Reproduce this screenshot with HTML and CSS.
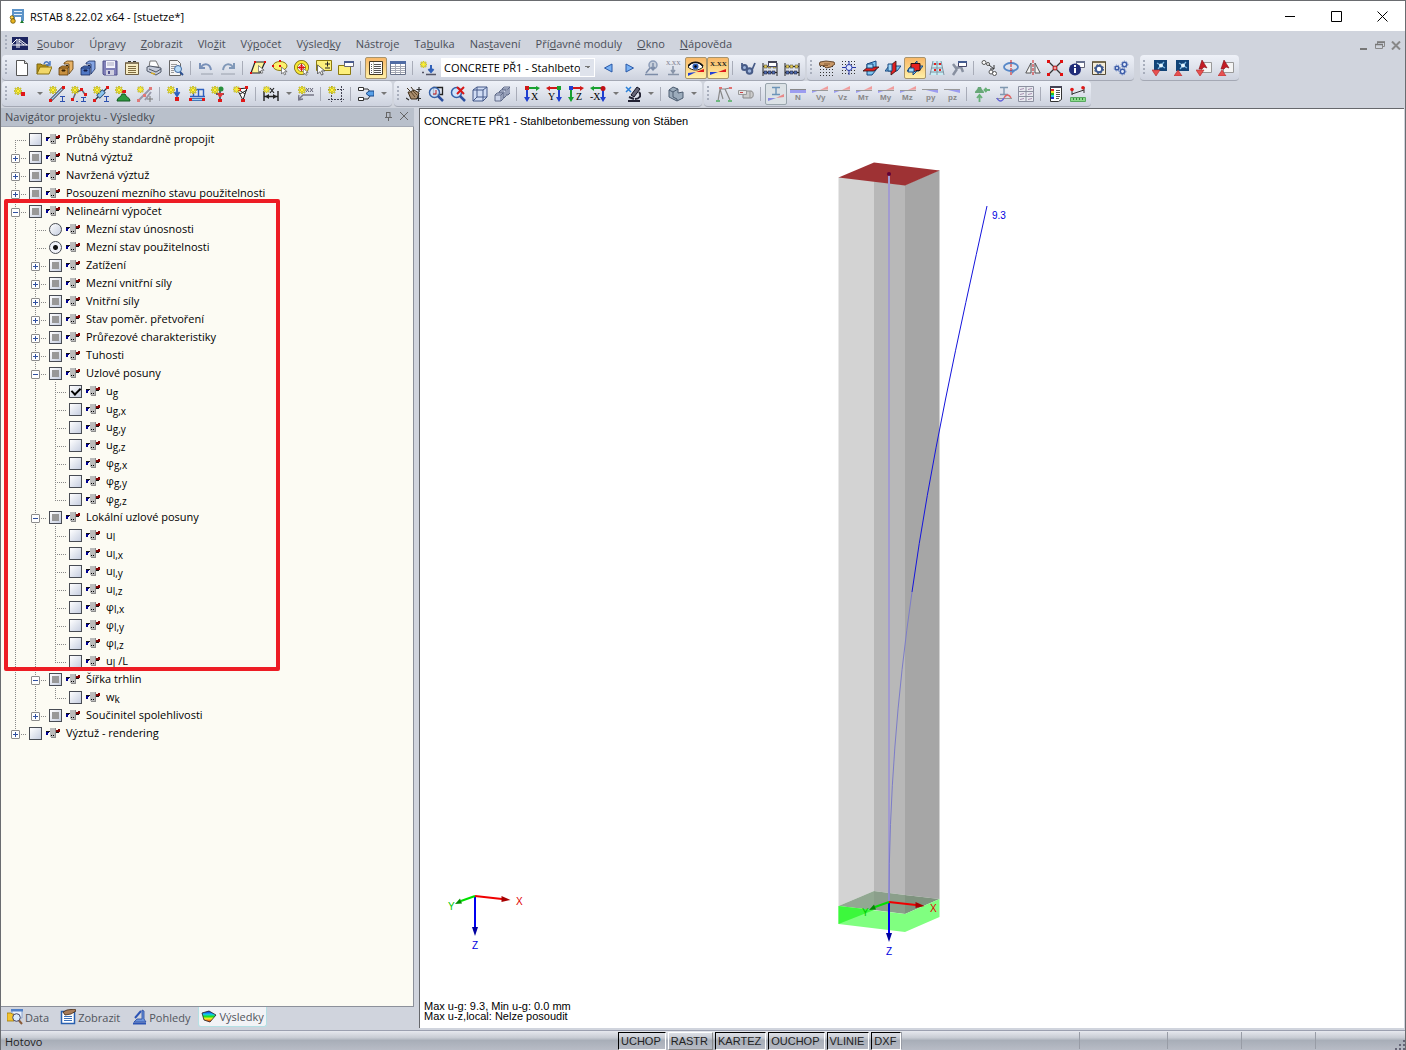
FILE: index.html
```html
<!DOCTYPE html>
<html lang="cs">
<head>
  <meta charset="UTF-8" />
  <title>RSTAB 8.22.02 x64 - [stuetze*]</title>
  <meta name="viewport" content="width=device-width, initial-scale=1.0"/>
  <link rel="stylesheet" href="styles.css">
</head>
<body>
  <!-- icon sprite -->
  <svg class="sprite" width="0" height="0" aria-hidden="true">
    <defs>
      <linearGradient id="g-rain" x1="0" y1="0" x2="0" y2="1"><stop offset="0" stop-color="#1414e0"/><stop offset=".3" stop-color="#10c8f0"/><stop offset=".5" stop-color="#20e020"/><stop offset=".7" stop-color="#f8f020"/><stop offset="1" stop-color="#e81010"/></linearGradient>
    </defs>
    <symbol id="star" viewBox="0 0 8 8"><path d="M4 0v8M0 4h8M1 1l6 6M7 1l-6 6" stroke="#a8a000" stroke-width="1.6"/><path d="M4 .5v7M.5 4h7M1.500 1.500l5 5M6.500 1.500l-5 5" stroke="#fff23c"/></symbol>
    <symbol id="cursor" viewBox="0 0 8 10"><path d="M.5.5v8l2-2 1.500 3 1.500-.7-1.500-3h3z" fill="#fff" stroke="#555" stroke-width=".8"/></symbol>
    <symbol id="result" viewBox="0 0 14 12"><path d="M0 4h5v1H0z" fill="#111"/><path d="M0 5h3v1H2v2H0z" fill="#000090"/><path d="M10 3h2V2h2v3h-4z" fill="#800000"/><path d="M8 5h5v1H8z" fill="#111"/><path d="M4 1h5v9H4z" fill="#bcbcbc"/><path d="M9 1h1v9H9zM5 10h5v1H5z" fill="#8c8c8c"/><path d="M5 8h1v1H5zM7 8h1v1H7z" fill="#000"/></symbol>

    <symbol id="app" viewBox="0 0 16 16"><path d="M3 1h12v12h-3V9H6v3H3z" fill="#5c93c8"/><path d="M5 3h8v1H5zM5 6h8v1H5z" fill="#e4f0fc"/><circle cx="3" cy="9.500" r="1.800" fill="#ffd24a" stroke="#6b5200" stroke-width=".8"/><circle cx="4" cy="13" r="2.300" fill="#e8b420" stroke="#6b5200" stroke-width=".8"/><path d="M11 15l2-3 2 3z" fill="#187828"/></symbol>
    <symbol id="bridge" viewBox="0 0 16 13"><path d="M0 0h16v13H0z" fill="#1c2460"/><path d="M0 8h16M5 2v9M7 2v9M5 2L0 7M7 2l8 6M7 4l5 4" stroke="#fff" fill="none"/></symbol>

    <symbol id="new" viewBox="0 0 16 16"><path d="M2.500.5h8l3 3v12h-11z" fill="#fff" stroke="#555"/><path d="M10.500.5v3h3" fill="#ddd" stroke="#555"/></symbol>
    <symbol id="open" viewBox="0 0 16 16"><path d="M1 14V4h4l1 1h6v3" fill="#b89418" stroke="#7a6410"/><path d="M1 14l3-7h12l-3 7z" fill="#f2d768" stroke="#8a7010"/><path d="M8 4c1-3 4-3 5 0M14 1v4h-4" stroke="#4a78c0" fill="none" stroke-width="1.500"/></symbol>
    <symbol id="block" viewBox="0 0 16 16"><path d="M1 8h9v7H1zM1 8l3-2h8l-2 2" fill="#c89040" stroke="#5a3808" stroke-width=".8"/><path d="M6 3l3-2h6v8l-4 5V4H6z" fill="#e8b468" stroke="#5a3808" stroke-width=".8"/><path d="M4 10h3v1H4zM8 5.500h2" fill="#3a2404" stroke="#3a2404"/></symbol>
    <symbol id="blockb" viewBox="0 0 16 16"><path d="M1 8h9v7H1zM1 8l3-2h8l-2 2" fill="#5078c4" stroke="#182c60" stroke-width=".8"/><path d="M6 3l3-2h6v8l-4 5V4H6z" fill="#86a6e4" stroke="#182c60" stroke-width=".8"/><path d="M4 10h3v1H4zM8 5.500h2" fill="#101c48" stroke="#101c48"/></symbol>
    <symbol id="save" viewBox="0 0 16 16"><path d="M1 1h14v14H2l-1-1z" fill="#8080b8" stroke="#50508c"/><path d="M4 1h9v7H4z" fill="#f4f4fc"/><path d="M5 3h7M5 5h7" stroke="#a8a8c0"/><path d="M4 10h8v5H4z" fill="#d0d0e0"/><path d="M6 11h2v3H6z" fill="#50508c"/></symbol>
    <symbol id="clip" viewBox="0 0 16 16"><path d="M1.500 2.500h13v12h-13z" fill="#f6ecc4" stroke="#6e5e40"/><path d="M2 2h12v2H2z" fill="#8a7c60"/><path d="M4 1.500h3M9 1.500h3" stroke="#333"/><path d="M4 6.500h8M4 8.500h8M4 10.500h8M4 12.500h8" stroke="#806c40"/></symbol>
    <symbol id="print" viewBox="0 0 16 16"><path d="M3 7l1-6h6l3 6z" fill="#fff" stroke="#777"/><path d="M1 7l3-1 11 2v4l-5 3-9-4z" fill="#c4cad8" stroke="#505868"/><path d="M3 9l7 3 5-3" fill="none" stroke="#505868"/><path d="M5 13l4 1" stroke="#d8b030" stroke-width="1.500"/></symbol>
    <symbol id="preview" viewBox="0 0 16 16"><path d="M1.500.5h8l3 3v12h-11z" fill="#f4f4f4" stroke="#666"/><path d="M3 4.500h6M3 6.500h5M3 8.500h3M3 10.500h3M3 12.500h3" stroke="#999"/><circle cx="10" cy="9" r="3.500" fill="#b8dcf8" stroke="#4068a0"/><path d="M12 12l3 3" stroke="#2c5090" stroke-width="2"/></symbol>
    <symbol id="undo" viewBox="0 0 16 16"><path d="M2 3v5h5M3 7c3-4 9-4 10 3" fill="none" stroke="#7890b8" stroke-width="2"/><path d="M3 14h12" stroke="#9aa0ac"/></symbol>
    <symbol id="redo" viewBox="0 0 16 16"><path d="M14 3v5H9M13 7c-3-4-9-4-10 3" fill="none" stroke="#8098b8" stroke-width="2"/><path d="M1 14h14" stroke="#9aa0ac"/></symbol>
    <symbol id="selrhomb" viewBox="0 0 16 16"><path d="M5 2h10l-5 11H1z" fill="#fdf49c" stroke="#222" stroke-width="1.200"/><path d="M4 1h2v2H4zM14 1h2v2h-2zM0 12h2v2H0z" fill="#e01010"/><use href="#cursor" x="8" y="5" width="7" height="9"/></symbol>
    <symbol id="selell" viewBox="0 0 16 16"><ellipse cx="8" cy="6" rx="7" ry="4.500" fill="#fdf06c" stroke="#8c7a10"/><path d="M7 0h2v2H7zM0 5h2v2H0zM7 5h2v2H7z" fill="#e01010"/><use href="#cursor" x="9" y="6" width="7" height="10"/></symbol>
    <symbol id="selring" viewBox="0 0 16 16"><circle cx="7.500" cy="7.500" r="5.500" fill="#fff" stroke="#77660a" stroke-width="4"/><circle cx="7.500" cy="7.500" r="5.500" fill="none" stroke="#f8e838" stroke-width="2.400"/><circle cx="7.500" cy="7.500" r="2" fill="none" stroke="#e01010"/><path d="M4 7.500h7M7.500 4v7" stroke="#e01010"/><use href="#cursor" x="9" y="8" width="6" height="8"/></symbol>
    <symbol id="selpm" viewBox="0 0 16 16"><path d="M.5.500h15v10H.5z" fill="#fdf07c" stroke="#8c7a10"/><path d="M9 4h5M11.500 1.500v5M9 8h5" stroke="#222"/><use href="#cursor" x="1" y="4" width="9" height="12"/></symbol>
    <symbol id="selwin" viewBox="0 0 16 16"><path d="M.5 5.500h12v9H.5z" fill="#fdf07c" stroke="#8c7a10"/><path d="M6.500 1.500h9v5h-9z" fill="#fff" stroke="#667"/><path d="M6 1h10v2H6z" fill="#4a5c90"/></symbol>
    <symbol id="list" viewBox="0 0 16 16"><path d="M1.500 1.500h13v13h-13z" fill="#fff" stroke="#443820"/><path d="M5.500 2v12" stroke="#ccb"/><path d="M3 4.500h1M3 6.500h1M3 8.500h1M3 10.500h1M3 12.500h1M6 4.500h7M6 6.500h7M6 8.500h7M6 10.500h7M6 12.500h7" stroke="#555"/></symbol>
    <symbol id="table" viewBox="0 0 16 16"><path d="M.5 1.500h15v13H.5z" fill="#fff" stroke="#667088"/><path d="M0 1h16v3H0z" fill="#506ca4"/><path d="M1 6.500h14M1 8.500h14M1 10.500h14M1 12.500h14M5.500 4v10M10.500 4v10" stroke="#a4a8b4"/></symbol>
    <symbol id="newload" viewBox="0 0 16 16"><use href="#star" x="0" y="1" width="7" height="7"/><path d="M11 5v6M8.500 9l2.500 3 2.500-3" stroke="#3060b8" fill="none" stroke-width="2"/><path d="M2 12.500h2M6 14.500h10" stroke="#556" stroke-width="1.500"/></symbol>
    <symbol id="prev" viewBox="0 0 16 16"><path d="M12 4v8L4.500 8z" fill="#7ab2f4" stroke="#2858a8"/></symbol>
    <symbol id="next" viewBox="0 0 16 16"><path d="M4 4v8l7.500-4z" fill="#7ab2f4" stroke="#2858a8"/></symbol>
    <symbol id="loadview" viewBox="0 0 16 16"><circle cx="9" cy="5" r="4" fill="#c8d0dc" stroke="#8c9cb8" stroke-width="1.500"/><path d="M6 8l-4 5M9 3v6M7 7l2 3 2-3M1 14.500h13" fill="none" stroke="#7c8ca8" stroke-width="1.500"/></symbol>
    <symbol id="xxx" viewBox="0 0 16 16"><path d="M7 6v7M5 10l2 3 2-3M2 14.500h11" fill="none" stroke="#8894a8" stroke-width="1.500"/></symbol>
    <symbol id="eye" viewBox="0 0 16 16"><path d="M0 7c4-6 11-6 15 0-4 4-11 4-15 0z" fill="#fff" stroke="#222"/><path d="M0 6c4-5 11-5 15 0" stroke="#111" stroke-width="1.500" fill="none"/><circle cx="7.500" cy="6.500" r="3" fill="#2c5cb4"/><circle cx="7.500" cy="6.500" r="1.200"/><path d="M0 16v-3l8-1z" fill="#2040d8"/><path d="M8 12l8-3v3z" fill="#e01818"/></symbol>
    <symbol id="slope" viewBox="0 0 16 16"><path d="M0 15v-3h8z" fill="#2040d8"/><path d="M8 12l8-3v3z" fill="#e01818"/></symbol>
    <symbol id="goggle" viewBox="0 0 16 16"><circle cx="4.500" cy="7.500" r="2.500" fill="#9cb4dc" stroke="#485c88" stroke-width="2"/><circle cx="9.500" cy="11" r="2.800" fill="#9cb4dc" stroke="#485c88" stroke-width="2"/><path d="M12 10l3-7M2 6V3" stroke="#485c88" stroke-width="1.800"/></symbol>
    <symbol id="abacus" viewBox="0 0 16 16"><path d="M1 3v13M15 3v13M1 6.500h14M1 12.500h14" stroke="#222" fill="none"/><path d="M2 5h3v3H2zM6 5h3v3H6zM11 5h3v3h-3z" fill="#e8cc50" stroke="#554" stroke-width=".6"/><path d="M2 11h3v3H2zM6 11h3v3H6zM10 11h3v3h-3z" fill="#5070b8" stroke="#223" stroke-width=".6"/></symbol>
    <symbol id="abacuswin" viewBox="0 0 16 16"><use href="#abacus"/><path d="M6.500 1.500h8v5h-8z" fill="#fff" stroke="#446"/><path d="M6 1h9v2H6z" fill="#445"/></symbol>
    <symbol id="hand" viewBox="0 0 16 16"><path d="M1 6.500h14M1 9.500h14M1 12.500h14M1 15.500h14" stroke="#333" stroke-dasharray="1 2"/><path d="M1 2l6-1 8 1 1 2-4 3-5 1-2-2-5-1z" fill="#c89868" stroke="#4c2c10" stroke-width=".8"/><path d="M5 4h6M4 5.500h5" stroke="#6c4420" stroke-width=".7"/></symbol>
    <symbol id="grid" viewBox="0 0 16 16"><path d="M1 1.500h14M1 4.500h14M1 7.500h14M1 10.500h14M1 13.500h14" stroke="#333" stroke-dasharray="1 2"/><path d="M8 1v14M1 7.500h14" stroke="#2838a8"/><circle cx="8" cy="7.500" r="3" fill="#dde6ff" stroke="#2838a8"/></symbol>
    <symbol id="plane1" viewBox="0 0 16 16"><path d="M4 4l9-3v9l-4 5H4z" fill="#7cc4f0" stroke="#184880"/><path d="M0 11l5-4h11l-5 4z" fill="#e02020" stroke="#301010" stroke-width=".8"/><path d="M4 4h6v4H4z" fill="#a0d8f8" stroke="#184880"/></symbol>
    <symbol id="plane2" viewBox="0 0 16 16"><path d="M0 11l4-5h12l-4 5z" fill="#7cc4f0" stroke="#184880"/><path d="M6 5l5-4v10l-5 4z" fill="#e02020" stroke="#301010" stroke-width=".8"/><path d="M3 4h4v7H3z" fill="#a0d8f8" stroke="#184880"/></symbol>
    <symbol id="plane3" viewBox="0 0 16 16"><path d="M0 11l4-5h12l-4 5zM6 5l4-4v10l-4 4z" fill="#7cc4f0" stroke="#184880"/><path d="M4 3.500h9v7H9l-1 1H4z" fill="#e82020" stroke="#301010"/><path d="M2 8h5v4H1z" fill="#a0d8f8" stroke="#184880"/></symbol>
    <symbol id="mesh" viewBox="0 0 16 16"><path d="M4 1h9l2 14H1z" fill="#c8ecf4"/><path d="M4 1L1 15M8 1v14M12 1l3 14M3 4h10M2 8h12M1 12h14" stroke="#8094a4" fill="none"/><path d="M5 3h2v2H5zM10 3h2v2h-2zM5 9h2v2H5zM10 9h2v2h-2z" fill="#e02020"/></symbol>
    <symbol id="toolwin" viewBox="0 0 16 16"><path d="M2 15l4-6M2 4l3 4 5-1 2 5" stroke="#8890a0" stroke-width="2.500" fill="none"/><path d="M7.500 1.500h8v5h-8z" fill="#fff" stroke="#446"/><path d="M7 1h9v2H7z" fill="#445c90"/></symbol>
    <symbol id="movecopy" viewBox="0 0 16 16"><g fill="#fff" stroke="#555"><circle cx="3" cy="2.500" r="2"/><circle cx="7" cy="4" r="1.500"/><circle cx="10" cy="12" r="2"/><circle cx="13.500" cy="13.500" r="2"/></g><path d="M8 5l5 4M13 5v4H9" stroke="#333" fill="none"/></symbol>
    <symbol id="rotate" viewBox="0 0 16 16"><ellipse cx="8" cy="7" rx="7" ry="4" fill="none" stroke="#5888c8" stroke-width="1.800"/><path d="M8 0v16" stroke="#d01818" stroke-dasharray="3 1"/><path d="M9 9l3 2-3 3" fill="#5888c8"/></symbol>
    <symbol id="mirror" viewBox="0 0 16 16"><path d="M6 3v10H.8zM10 3v10h5.200z" fill="#f4f4f4" stroke="#555"/><path d="M8 0v16" stroke="#d01818" stroke-dasharray="3 1"/></symbol>
    <symbol id="cross" viewBox="0 0 16 16"><path d="M1 1l14 14M15 1L1 15" stroke="#333" stroke-width="1.300"/><path d="M0 0h3v3H0zM13 0h3v3h-3zM0 13h3v3H0zM13 13h3v3h-3z" fill="#e01010"/><circle cx="8" cy="8" r="2" fill="#e8a0a0" stroke="#c01010"/></symbol>
    <symbol id="info" viewBox="0 0 16 16"><path d="M7.500 1.500h8v6h-8z" fill="#fff" stroke="#667"/><path d="M7 1h9v2H7z" fill="#667090"/><circle cx="6" cy="9.500" r="6" fill="#202c78"/><path d="M5 5h2v2H5zM5 8h2v5H5z" fill="#fff"/></symbol>
    <symbol id="gearbox" viewBox="0 0 16 16"><path d="M1.500 1.500h13v13h-13z" fill="#f4ecd8" stroke="#554c38"/><path d="M2 1h12v2H2z" fill="#776c50"/><circle cx="8" cy="9" r="3.200" fill="#fff" stroke="#3c5890" stroke-width="2"/><circle cx="8" cy="9" r="4.500" fill="none" stroke="#3c5890" stroke-dasharray="2 1.500"/></symbol>
    <symbol id="gears" viewBox="0 0 16 16"><g fill="#e4ecfc" stroke="#3c5ca8" stroke-width="1.500"><circle cx="4" cy="8" r="1.800"/><circle cx="11.500" cy="4.500" r="2.200"/><circle cx="9.500" cy="11.500" r="2.200"/></g><g fill="none" stroke="#5c7cc0" stroke-dasharray="1 1.500"><circle cx="4" cy="8" r="3"/><circle cx="11.500" cy="4.500" r="3.400"/><circle cx="9.500" cy="11.500" r="3.400"/></g></symbol>
    <symbol id="rf" viewBox="0 0 16 16"><path d="M2 0h13v11H2z" fill="#124478"/><path d="M5 3l8 5M12 2L6 9" stroke="#7cb8e4" stroke-width="1.200"/><circle cx="9" cy="5.500" r="2" fill="#e4f6ff"/></symbol>
    <symbol id="ad" viewBox="0 0 16 16"><path d="M5.500 2.500h10v10h-10z" fill="#f4f4f4" stroke="#999"/><path d="M3 9l3-9 5 8-3-1-2 2z" fill="#c41c24" stroke="#801018" stroke-width=".6"/></symbol>
    <symbol id="down" viewBox="0 0 16 16"><path d="M0 10h8l-4 6z" fill="#e85050" stroke="#b02828" stroke-width=".6"/></symbol>
    <symbol id="up" viewBox="0 0 16 16"><path d="M0 16h8l-4-6z" fill="#e85050" stroke="#b02828" stroke-width=".6"/></symbol>

    <symbol id="node" viewBox="0 0 16 16"><use href="#star" x="0" y="1" width="8" height="8"/><path d="M7 6h4v4H7z" fill="#e01818"/></symbol>
    <symbol id="line" viewBox="0 0 16 16"><path d="M2 14L14 2" stroke="#334" stroke-width="3"/><path d="M2 14L14 2" stroke="#a8d0f0" stroke-width="1.400"/><path d="M0 13h3v3H0zM13 0h3v3h-3z" fill="#e01818"/><path d="M11 10.500h5M11 15.500h5M13.500 10v5" stroke="#2c50b0"/><use href="#star" x="0" y="0" width="8" height="8"/></symbol>
    <symbol id="poly" viewBox="0 0 16 16"><path d="M2 13l3-7 6-2 4 6" fill="none" stroke="#667" stroke-width="1.500"/><path d="M0 12h3v3H0zM9 2h3v3H9zM13 7h3v3h-3z" fill="#e01818"/><path d="M10 11.500h5M10 15.500h5M12.500 11v5M5 15.500h2" stroke="#2c50b0"/><use href="#star" x="0" y="0" width="8" height="8"/></symbol>
    <symbol id="member" viewBox="0 0 16 16"><path d="M2 14L14 2" stroke="#234" stroke-width="1.200"/><path d="M5 11l6-6" stroke="#246" stroke-width="5"/><path d="M5.500 10.500l5-5" stroke="#8cc4f0" stroke-width="3.400"/><path d="M0 13h3v3H0zM13 0h3v3h-3z" fill="#e01818"/><path d="M11 10.500h5M11 15.500h5M13.500 10v5" stroke="#2c50b0"/><use href="#star" x="0" y="0" width="8" height="8"/></symbol>
    <symbol id="support" viewBox="0 0 16 16"><path d="M2 15c0-4 4-3 5-7h3c1 4 5 3 5 7z" fill="#2c9c40" stroke="#145820"/><path d="M7 4h4v3H7z" fill="#e01818"/><use href="#star" x="0" y="0" width="8" height="8"/></symbol>
    <symbol id="setmem" viewBox="0 0 16 16"><path d="M2 14L13 3M8 14l6-8" stroke="#99a" stroke-width="2"/><path d="M0 13h3v3H0zM12 1h3v3h-3zM6 8h3v3H6z" fill="#e07878"/><path d="M10 13h6M13 10v6" stroke="#777"/><use href="#star" x="0" y="0" width="7" height="7"/></symbol>
    <symbol id="nload" viewBox="0 0 16 16"><path d="M10 2v7M7.500 6l2.500 4 2.500-4" stroke="#2c60c0" fill="none" stroke-width="1.800"/><path d="M8 11h4v4H8z" fill="#e01818"/><use href="#star" x="0" y="0" width="8" height="8"/></symbol>
    <symbol id="mload" viewBox="0 0 16 16"><path d="M2 3.500h13M4.500 3v7M9.500 3v7M14.500 3v7M1 10.500h15" stroke="#2c60c0" fill="none" stroke-width="1.400"/><path d="M0 12h3v3H0zM13 12h3v3h-3z" fill="#e01818"/><path d="M3 13.500h10" stroke="#3c6cb0" stroke-width="3"/><path d="M3 13.500h10" stroke="#a0d0f4" stroke-width="1.200"/><use href="#star" x="0" y="0" width="8" height="8"/></symbol>
    <symbol id="impload" viewBox="0 0 16 16"><path d="M9 2v12M5 8h8" stroke="#334" stroke-width="1.500"/><circle cx="10" cy="3" r="2.500" fill="#28903c"/><path d="M6 7h7l-3 4H8z" fill="#e03838"/><path d="M7 13h4v3H7z" fill="#e01818"/><use href="#star" x="0" y="0" width="8" height="8"/></symbol>
    <symbol id="genload" viewBox="0 0 16 16"><path d="M4 3l6 11 4-12z" fill="#fff" stroke="#222"/><path d="M7 8l7-4M6 4l6 4" stroke="#222"/><path d="M8 13h4v3H8zM12 0h3v3h-3zM5 2h3v3H5z" fill="#e01818"/><use href="#star" x="0" y="0" width="7" height="7"/></symbol>
    <symbol id="dim" viewBox="0 0 16 16"><path d="M1 5v10M15 5v10M1 10.500h14" stroke="#222" stroke-width="1.400"/><path d="M2 10.500l4-2.500v5zM14 10.500l-4-2.500v5z" fill="#222"/><path d="M7 2l4 5M11 2L7 7" stroke="#222" stroke-width="1.200"/><use href="#star" x="0" y="0" width="7" height="7"/></symbol>
    <symbol id="comment" viewBox="0 0 16 16"><path d="M0 14l5-5h11M0 14l1-5M0 14l5-1" stroke="#778" fill="none" stroke-width="1.400"/><path d="M8 2l3 4M11 2L8 6M12 2l3 4M15 2l-3 4" stroke="#667"/><use href="#star" x="0" y="0" width="8" height="8"/></symbol>
    <symbol id="frame" viewBox="0 0 16 16"><path d="M3.500 0v16M13.500 0v16M0 3.500h16M0 13.500h16" stroke="#445" stroke-dasharray="2 1"/><use href="#star" x="0" y="0" width="8" height="8"/></symbol>
    <symbol id="flow" viewBox="0 0 16 16"><path d="M.5 1.500h5v3h-5zM.5 11.500h5v3h-5z" fill="#fff" stroke="#333"/><path d="M6 3h4l2 3M6 13h4l2-3" fill="none" stroke="#333"/><path d="M11 5h5v5h-5l-3-2.500z" fill="#58a0e8" stroke="#184888"/></symbol>
    <symbol id="pan" viewBox="0 0 16 16"><path d="M1 2l3 3M5 1l3 4M2 6l3 7h6l2-6-5-3-4 2z" fill="#a88c6c" stroke="#3c2c18"/><path d="M5 6l4 5M7 5l4 4" stroke="#5c4428"/><path d="M13 1v5M10.500 3.500h5M12.500 9v6M10 12.500h5M0 12l3 2" stroke="#333" stroke-width="1.200"/></symbol>
    <symbol id="zoomwin" viewBox="0 0 16 16"><path d="M5.500 1.500h9v7h-9z" fill="none" stroke="#222" stroke-width="1.300"/><circle cx="6.500" cy="6.500" r="5" fill="#cfe4fc" fill-opacity=".8" stroke="#3460a8" stroke-width="1.500"/><path d="M10 10l5 5" stroke="#2c50a0" stroke-width="2.500"/><path d="M8 4v4H5" stroke="#c01818" fill="none"/></symbol>
    <symbol id="zoomx" viewBox="0 0 16 16"><circle cx="6.500" cy="6.500" r="5" fill="#cfe4fc" stroke="#3460a8" stroke-width="1.500"/><path d="M10 10l5 5" stroke="#2c50a0" stroke-width="2.500"/><path d="M7 1l7 7M14 1L7 8" stroke="#d81818" stroke-width="2"/></symbol>
    <symbol id="cube" viewBox="0 0 16 16"><path d="M1 4l4-3h10v10l-4 4H1z" fill="#d0dcf4" stroke="#445888"/><path d="M1 4h10v11M11 4l4-3M5 1v10h10M5 11l-4 4" fill="none" stroke="#445888"/></symbol>
    <symbol id="cubes" viewBox="0 0 16 16"><g fill="#ccd4e8" stroke="#556080" stroke-width=".9"><path d="M8 3l2-2h6v6l-2 2H8zM8 3h6v6M14 3l2-2"/><path d="M5 6l2-2h5v6l-2 2H5zM5 6h5v6"/><path d="M1 9l2-2h6v6l-2 2H1zM1 9h6v6M7 9l2-2"/></g></symbol>
    <symbol id="vx" viewBox="0 0 16 16"><path d="M3 2h10" stroke="#18a030" stroke-width="2"/><path d="M12 0l4 2-4 3z" fill="#18a030"/><path d="M3 3v9" stroke="#2040d0" stroke-width="2"/><path d="M0 11l3 5 3-5z" fill="#2040d0"/><path d="M1 0h4v4H1z" fill="#d01818"/></symbol>
    <symbol id="vy" viewBox="0 0 16 16"><path d="M3 2h10" stroke="#d01818" stroke-width="2"/><path d="M4 0L0 2l4 3z" fill="#d01818"/><path d="M13 3v9" stroke="#2040d0" stroke-width="2"/><path d="M10 11l3 5 3-5z" fill="#2040d0"/><path d="M11 0h4v4h-4z" fill="#18a030"/></symbol>
    <symbol id="vz" viewBox="0 0 16 16"><path d="M3 2h10" stroke="#d01818" stroke-width="2"/><path d="M12 0l4 2-4 3z" fill="#d01818"/><path d="M3 3v9" stroke="#18a030" stroke-width="2"/><path d="M0 11l3 5 3-5z" fill="#18a030"/><path d="M1 0h4v4H1z" fill="#2040d0"/></symbol>
    <symbol id="vmx" viewBox="0 0 16 16"><path d="M3 2h10" stroke="#18a030" stroke-width="2"/><path d="M4 0L0 2l4 3z" fill="#18a030"/><path d="M13 3v9" stroke="#2040d0" stroke-width="2"/><path d="M10 11l3 5 3-5z" fill="#2040d0"/><circle cx="13" cy="2.500" r="2.500" fill="#c01018"/></symbol>
    <symbol id="scope" viewBox="0 0 16 16"><path d="M12 1l3 2-6 8-3-2z" fill="#667" stroke="#112"/><path d="M14 6c3 4 0 7-4 7M3 15h12M4 11l5 2" fill="none" stroke="#223" stroke-width="2"/><path d="M1 1l5 5M6 1L1 6" stroke="#2c80d8" stroke-width="1.500"/></symbol>
    <symbol id="solid" viewBox="0 0 16 16"><path d="M1 4l4-3 5 2v4l5-1v6l-6 3-8-4z" fill="#9cacbc" stroke="#4c5c70"/><path d="M1 4l4 2v5l4 2v2M5 6l5-3" fill="none" stroke="#4c5c70"/></symbol>
    <symbol id="deform" viewBox="0 0 16 16"><path d="M2 15L4 3l5 0M9 3l5-1M4 3l3 10M9 3l5 11" fill="none" stroke="#888" stroke-width="1.200"/><path d="M3 1h3v2H3zM13 1h3v2h-3z" fill="#e07070"/><path d="M0 14h4v2H0zM12 14h4v2h-4z" fill="#70b880"/></symbol>
    <symbol id="cyl" viewBox="0 0 16 16"><path d="M5 5h8c3 0 3 7 0 7H5z" fill="#ccc" stroke="#888"/><path d="M.5 4.500h8v4h-8z" fill="#e4e4e4" stroke="#999"/><path d="M2 6.500h3" stroke="#c44"/><path d="M12 5v7" stroke="#999"/></symbol>
    <symbol id="ibeam" viewBox="0 0 16 16"><path d="M4 1.500h8M4 8.500h8M8 1v8" stroke="#6c94b8" stroke-width="1.400"/><path d="M0 15v-3h8z" fill="#8888e0"/><path d="M8 12l8-4v3z" fill="#e88888"/></symbol>
    <symbol id="rn" viewBox="0 0 16 16"><path d="M0 3h16v4H0z" fill="#9c9cf0"/><path d="M0 3.500h16" stroke="#888"/></symbol>
    <symbol id="rv" viewBox="0 0 16 16"><path d="M0 7V4.500L8 4z" fill="#9c9cf0"/><path d="M8 4l8-4v3.500z" fill="#f09c9c"/><path d="M0 4.500h16" stroke="#999"/></symbol>
    <symbol id="rp" viewBox="0 0 16 16"><path d="M0 3h16v4z" fill="#9c9cf0"/><path d="M0 3.500h16" stroke="#999"/></symbol>
    <symbol id="react" viewBox="0 0 16 16"><path d="M1 7c0-3 2-2 3-6h3c1 4 3 3 3 6z" fill="#68a878"/><path d="M10 4h6M12.500 2l-2 2 2 2M5.500 16V9M3 12l2.500-3 2.500 3" fill="none" stroke="#68b078" stroke-width="1.800"/></symbol>
    <symbol id="wave" viewBox="0 0 16 16"><path d="M4 1.500h8M4 8.500h8M8 1v8" stroke="#8098b0" stroke-width="1.400"/><path d="M0 12.500h16" stroke="#999"/><path d="M1 12c2 4 5 4 7 0" fill="none" stroke="#6868d8" stroke-width="1.500"/><path d="M8 12c2-4 5-4 7 0" fill="none" stroke="#e06868" stroke-width="1.500"/></symbol>
    <symbol id="panels" viewBox="0 0 16 16"><path d="M.5.500h15v15H.5zM8 0v16M0 5.500h16M0 10.500h16" fill="#e8eaf0" stroke="#8c90a0"/><path d="M2 3.500l4-1M10 3.500l4-1M2 8.500l4-1M10 8.500l4-1M2 13.500l4-1M10 13.500l4-1" stroke="#a890b0"/></symbol>
    <symbol id="colors" viewBox="0 0 16 16"><path d="M2.500.500h11v13l-3 2h-8z" fill="#fff" stroke="#333"/><path d="M2 0h12v2H2z" fill="#445"/><path d="M3 3h3v2H3z" fill="#e02020"/><path d="M3 5h3v2H3z" fill="#f0e020"/><path d="M3 7h3v2H3z" fill="#20c020"/><path d="M3 9h3v2H3z" fill="#20c8e0"/><path d="M3 11h3v2H3z" fill="#2030d0"/><path d="M8 4.500h4M8 6.500h4M8 8.500h4M8 10.500h4M8 12.500h3" stroke="#555"/></symbol>
    <symbol id="ruler" viewBox="0 0 16 16"><path d="M.5 11.500h15v4H.5z" fill="#8cdc8c" stroke="#58a860"/><path d="M3.500 12v2M6.500 12v2M9.500 12v2M12.500 12v2" stroke="#388040"/><path d="M2 8l12-4M2 4v5M14 1v6" stroke="#333"/><circle cx="2" cy="3.500" r="1.800" fill="#e01818"/><circle cx="13" cy="1.800" r="1.800" fill="#e01818"/></symbol>

    <symbol id="t-data" viewBox="0 0 16 16"><path d="M5 1h10v8H5z" fill="#e8f0fc" stroke="#88a4d0"/><path d="M4 0h12v2.500H4z" fill="#5080c8"/><path d="M0 4h4l1 1h2v7H0z" fill="#f4c430" stroke="#a07808" stroke-width=".8"/><circle cx="9.500" cy="8.500" r="3.800" fill="#dcecfc" stroke="#446"/><path d="M12 11.500l3 3.500" stroke="#8a5c38" stroke-width="2"/></symbol>
    <symbol id="t-show" viewBox="0 0 16 16"><path d="M1.500 2.500h13v12h-13z" fill="#fff" stroke="#2860b0" stroke-width="1.500"/><path d="M4 7.500h8M4 9.500h8M4 11.500h8" stroke="#3c70b8"/><path d="M3 3l4-2 8-1 1 2-5 3-6 1z" fill="#a87c58" stroke="#3c2410" stroke-width=".8"/></symbol>
    <symbol id="t-views" viewBox="0 0 16 16"><path d="M11 1l2 1v8l2 3H3l3-3h5z" fill="#6c94dc" stroke="#2448a0" stroke-width=".8"/><path d="M10 2L4 9M2 14.500h13" stroke="#2c54b4" stroke-width="2"/></symbol>
    <symbol id="t-res" viewBox="0 0 16 16"><path d="M1 4l7-2 7 4-6 7-6-2z" fill="url(#g-rain)" stroke="#222" stroke-width=".8"/></symbol>
    <symbol id="pin" viewBox="0 0 10 10"><path d="M3.500 1v5M7 1v5M3 1.500h4M2 6.500h7M5.500 7v3" stroke="#666" fill="none"/></symbol>
    <symbol id="close" viewBox="0 0 10 10"><path d="M1 1l8 8M9 1L1 9" stroke="#666" fill="none"/></symbol>
  </svg>

  <div class="window">
    <header class="titlebar">
      <svg class="ico"><use href="#app"/></svg>
      <span class="title">RSTAB 8.22.02 x64 - [stuetze*]</span>
      <div class="winbtns">
        <button aria-label="Minimalizovat"><svg viewBox="0 0 11 11"><path d="M0 5.500h10" stroke="#000"/></svg></button>
        <button aria-label="Maximalizovat"><svg viewBox="0 0 11 11"><path d="M.5.500h10v10H.5z" fill="none" stroke="#000"/></svg></button>
        <button aria-label="Zavřít"><svg viewBox="0 0 11 11"><path d="M.5.500l10 10M10.500.500l-10 10" stroke="#000"/></svg></button>
      </div>
    </header>

    <nav class="menubar">
      <span class="grip"></span>
      <svg class="logo"><use href="#bridge"/></svg>
      <a href="#"><u>S</u>oubor</a>
      <a href="#">Úpr<u>a</u>vy</a>
      <a href="#"><u>Z</u>obrazit</a>
      <a href="#">Vlo<u>ž</u>it</a>
      <a href="#">Vý<u>p</u>očet</a>
      <a href="#">Výsled<u>k</u>y</a>
      <a href="#">Nástro<u>j</u>e</a>
      <a href="#">Ta<u>b</u>ulka</a>
      <a href="#">Nas<u>t</u>avení</a>
      <a href="#">Pří<u>d</u>avné moduly</a>
      <a href="#"><u>O</u>kno</a>
      <a href="#"><u>N</u>ápověda</a>
      <div class="mdibtns">
        <button aria-label="Minimalizovat dokument"><svg viewBox="0 0 10 9"><path d="M1 8h7" stroke="#777" stroke-width="2"/></svg></button>
        <button aria-label="Obnovit dokument"><svg viewBox="0 0 10 9"><path d="M2.500 3V1.500h7v4H8M.5 3.500h7v4h-7z" fill="none" stroke="#888"/><path d="M2 1h8M0 3.500h8" stroke="#777" stroke-width="1.500"/></svg></button>
        <button aria-label="Zavřít dokument"><svg viewBox="0 0 10 9"><path d="M1 .5l8 8M9 .5l-8 8" stroke="#888" stroke-width="2"/></svg></button>
      </div>
    </nav>

    <div class="toolrow">
      <div class="toolbar">
        <span class="grip"></span>
        <button aria-label="Nový"><svg><use href="#new"/></svg></button>
        <button aria-label="Otevřít"><svg><use href="#open"/></svg></button>
        <button aria-label="Otevřít blok"><svg><use href="#block"/></svg></button>
        <button aria-label="Uložit blok"><svg><use href="#blockb"/></svg></button>
        <button aria-label="Uložit"><svg><use href="#save"/></svg></button>
        <button aria-label="Schránka"><svg><use href="#clip"/></svg></button>
        <button aria-label="Tisk"><svg><use href="#print"/></svg></button>
        <button aria-label="Náhled"><svg><use href="#preview"/></svg></button>
        <span class="sep"></span>
        <button aria-label="Zpět"><svg><use href="#undo"/></svg></button>
        <button aria-label="Znovu"><svg><use href="#redo"/></svg></button>
        <span class="sep"></span>
        <button aria-label="Výběr kosodélníkem"><svg><use href="#selrhomb"/></svg></button>
        <button aria-label="Výběr elipsou"><svg><use href="#selell"/></svg></button>
        <button aria-label="Výběr mezikružím"><svg><use href="#selring"/></svg></button>
        <button aria-label="Přidat k výběru"><svg><use href="#selpm"/></svg></button>
        <button aria-label="Speciální výběr"><svg><use href="#selwin"/></svg></button>
        <span class="sep"></span>
        <button class="on" aria-label="Navigátor"><svg><use href="#list"/></svg></button>
        <button aria-label="Tabulky"><svg><use href="#table"/></svg></button>
        <span class="sep"></span>
        <button aria-label="Nový zatěžovací stav"><svg><use href="#newload"/></svg></button>
        <select class="combo" aria-label="Zatěžovací stav">
          <option>CONCRETE PŘ1 - Stahlbetonbemessung von Stäben</option>
        </select>
        <button aria-label="Předchozí"><svg><use href="#prev"/></svg></button>
        <button aria-label="Další"><svg><use href="#next"/></svg></button>
        <button aria-label="Zobrazit zatížení"><svg><use href="#loadview"/></svg></button>
        <button aria-label="Hodnoty zatížení"><svg><use href="#xxx"/><text class="val" x="0" y="5">X.XX</text></svg></button>
        <button class="on" aria-label="Zobrazit výsledky"><svg><use href="#eye"/></svg></button>
        <button class="on" aria-label="Zobrazit hodnoty"><svg><use href="#slope"/><text class="val strong" x="0" y="6">X.XX</text></svg></button>
        <span class="sep"></span>
        <button aria-label="Kontrola"><svg><use href="#goggle"/></svg></button>
        <button aria-label="Parametry výpočtu"><svg><use href="#abacuswin"/></svg></button>
        <button aria-label="Spočítat vše"><svg><use href="#abacus"/></svg></button>
      </div>
      <div class="toolbar">
        <span class="grip"></span>
        <button aria-label="Pracovní rovina"><svg><use href="#hand"/></svg></button>
        <button aria-label="Počátek"><svg><use href="#grid"/></svg></button>
        <button aria-label="Rovina XY"><svg><use href="#plane1"/></svg></button>
        <button aria-label="Rovina YZ"><svg><use href="#plane2"/></svg></button>
        <button class="on" aria-label="Rovina XZ"><svg><use href="#plane3"/></svg></button>
        <button aria-label="Rastr"><svg><use href="#mesh"/></svg></button>
        <button aria-label="Nastavení roviny"><svg><use href="#toolwin"/></svg></button>
        <span class="sep"></span>
        <button aria-label="Posun"><svg><use href="#movecopy"/></svg></button>
        <button aria-label="Otočení"><svg><use href="#rotate"/></svg></button>
        <button aria-label="Zrcadlení"><svg><use href="#mirror"/></svg></button>
        <button aria-label="Spojit pruty"><svg><use href="#cross"/></svg></button>
        <button aria-label="Informace"><svg><use href="#info"/></svg></button>
        <button aria-label="Nastavení"><svg><use href="#gearbox"/></svg></button>
        <button aria-label="Generování"><svg><use href="#gears"/></svg></button>
      </div>
      <div class="toolbar gap">
        <span class="grip"></span>
        <button aria-label="Import RFEM"><svg><use href="#rf"/><use href="#down"/></svg></button>
        <button aria-label="Export RFEM"><svg><use href="#rf"/><use href="#up"/></svg></button>
        <button aria-label="Import DXF"><svg><use href="#ad"/><use href="#down"/></svg></button>
        <button aria-label="Export DXF"><svg><use href="#ad"/><use href="#up"/></svg></button>
      </div>
    </div>

    <div class="toolrow">
      <div class="toolbar">
        <span class="grip"></span>
        <button aria-label="Nový uzel"><svg><use href="#node"/></svg></button>
        <button class="drop" aria-label="Další možnosti uzlu"></button>
        <button aria-label="Nový prut"><svg><use href="#line"/></svg></button>
        <button aria-label="Polyprut"><svg><use href="#poly"/></svg></button>
        <button aria-label="Prut dialogem"><svg><use href="#member"/></svg></button>
        <button aria-label="Uzlová podpora"><svg><use href="#support"/></svg></button>
        <button aria-label="Sada prutů"><svg><use href="#setmem"/></svg></button>
        <span class="sep"></span>
        <button aria-label="Zatížení na uzel"><svg><use href="#nload"/></svg></button>
        <button aria-label="Zatížení na prut"><svg><use href="#mload"/></svg></button>
        <button aria-label="Vynucená deformace"><svg><use href="#impload"/></svg></button>
        <button aria-label="Generovat zatížení"><svg><use href="#genload"/></svg></button>
        <span class="sep"></span>
        <button aria-label="Kóta"><svg><use href="#dim"/></svg></button>
        <button class="drop" aria-label="Další kóty"></button>
        <button aria-label="Komentář"><svg><use href="#comment"/></svg></button>
        <span class="sep"></span>
        <button aria-label="Vodicí linie"><svg><use href="#frame"/></svg></button>
        <span class="sep"></span>
        <button aria-label="Vizuální objekt"><svg><use href="#flow"/></svg></button>
        <button class="drop" aria-label="Další objekty"></button>
      </div>
      <div class="toolbar">
        <span class="grip"></span>
        <button aria-label="Posun pohledu"><svg><use href="#pan"/></svg></button>
        <button aria-label="Zvětšit oknem"><svg><use href="#zoomwin"/></svg></button>
        <button aria-label="Zobrazit vše"><svg><use href="#zoomx"/></svg></button>
        <button aria-label="Izometrie"><svg><use href="#cube"/></svg></button>
        <button aria-label="Perspektiva"><svg><use href="#cubes"/></svg></button>
        <span class="sep"></span>
        <button aria-label="Pohled X"><svg><use href="#vx"/><text class="dir" x="7" y="14">X</text></svg></button>
        <button aria-label="Pohled Y"><svg><use href="#vy"/><text class="dir" x="2" y="14">Y</text></svg></button>
        <button aria-label="Pohled Z"><svg><use href="#vz"/><text class="dir" x="8" y="14">Z</text></svg></button>
        <button aria-label="Pohled -X"><svg><use href="#vmx"/><text class="dir" x="0" y="14">-X</text></svg></button>
        <button class="drop" aria-label="Další pohledy"></button>
        <button aria-label="Viditelnost"><svg><use href="#scope"/></svg></button>
        <button class="drop" aria-label="Další viditelnosti"></button>
        <span class="sep"></span>
        <button aria-label="Zobrazení modelu"><svg><use href="#solid"/></svg></button>
        <button class="drop" aria-label="Další zobrazení"></button>
      </div>
      <div class="toolbar">
        <span class="grip"></span>
        <button aria-label="Deformace"><svg><use href="#deform"/></svg></button>
        <button aria-label="Animace"><svg><use href="#cyl"/></svg></button>
        <span class="sep"></span>
        <button class="pressed" aria-label="Průběhy"><svg><use href="#ibeam"/></svg></button>
        <button aria-label="N"><svg><use href="#rn"/><text class="sym" x="5" y="14">N</text></svg></button>
        <button aria-label="Vy"><svg><use href="#rv"/><text class="sym" x="4" y="14">Vy</text></svg></button>
        <button aria-label="Vz"><svg><use href="#rv"/><text class="sym" x="4" y="14">Vz</text></svg></button>
        <button aria-label="MT"><svg><use href="#rv"/><text class="sym" x="2" y="14">Mт</text></svg></button>
        <button aria-label="My"><svg><use href="#rv"/><text class="sym" x="2" y="14">My</text></svg></button>
        <button aria-label="Mz"><svg><use href="#rv"/><text class="sym" x="2" y="14">Mz</text></svg></button>
        <button aria-label="py"><svg><use href="#rp"/><text class="sym" x="4" y="14">py</text></svg></button>
        <button aria-label="pz"><svg><use href="#rp"/><text class="sym" x="4" y="14">pz</text></svg></button>
        <span class="sep"></span>
        <button aria-label="Reakce"><svg><use href="#react"/></svg></button>
        <button aria-label="Průběhy na prutu"><svg><use href="#wave"/></svg></button>
        <button aria-label="Více oken"><svg><use href="#panels"/></svg></button>
        <span class="sep"></span>
        <button aria-label="Řídicí panel"><svg><use href="#colors"/></svg></button>
        <button aria-label="Měření"><svg><use href="#ruler"/></svg></button>
      </div>
    </div>

    <main class="work">
      <aside class="navigator">
        <div class="navhead">
          <span>Navigátor projektu - Výsledky</span>
          <button aria-label="Ukotvit"><svg><use href="#pin"/></svg></button>
          <button aria-label="Zavřít panel"><svg><use href="#close"/></svg></button>
        </div>
        <div class="treebox">
          <ul class="tree">
            <li><div class="row"><span class="noexp"></span><label><input type="checkbox"><svg><use href="#result"/></svg>Průběhy standardně propojit</label></div></li>
            <li><div class="row"><button class="exp plus" aria-label="Rozbalit"></button><label><input type="checkbox" class="part"><svg><use href="#result"/></svg>Nutná výztuž</label></div></li>
            <li><div class="row"><button class="exp plus" aria-label="Rozbalit"></button><label><input type="checkbox" class="part"><svg><use href="#result"/></svg>Navržená výztuž</label></div></li>
            <li><div class="row"><button class="exp plus" aria-label="Rozbalit"></button><label><input type="checkbox" class="part"><svg><use href="#result"/></svg>Posouzení mezního stavu použitelnosti</label></div></li>
            <li><div class="row"><button class="exp" aria-label="Sbalit"></button><label><input type="checkbox" class="part"><svg><use href="#result"/></svg>Nelineární výpočet</label></div>
              <ul>
                <li><div class="row"><span class="noexp"></span><label><input type="radio" name="stav"><svg><use href="#result"/></svg>Mezní stav únosnosti</label></div></li>
                <li><div class="row"><span class="noexp"></span><label><input type="radio" name="stav" checked><svg><use href="#result"/></svg>Mezní stav použitelnosti</label></div></li>
                <li><div class="row"><button class="exp plus" aria-label="Rozbalit"></button><label><input type="checkbox" class="part"><svg><use href="#result"/></svg>Zatížení</label></div></li>
                <li><div class="row"><button class="exp plus" aria-label="Rozbalit"></button><label><input type="checkbox" class="part"><svg><use href="#result"/></svg>Mezní vnitřní síly</label></div></li>
                <li><div class="row"><button class="exp plus" aria-label="Rozbalit"></button><label><input type="checkbox" class="part"><svg><use href="#result"/></svg>Vnitřní síly</label></div></li>
                <li><div class="row"><button class="exp plus" aria-label="Rozbalit"></button><label><input type="checkbox" class="part"><svg><use href="#result"/></svg>Stav poměr. přetvoření</label></div></li>
                <li><div class="row"><button class="exp plus" aria-label="Rozbalit"></button><label><input type="checkbox" class="part"><svg><use href="#result"/></svg>Průřezové charakteristiky</label></div></li>
                <li><div class="row"><button class="exp plus" aria-label="Rozbalit"></button><label><input type="checkbox" class="part"><svg><use href="#result"/></svg>Tuhosti</label></div></li>
                <li><div class="row"><button class="exp" aria-label="Sbalit"></button><label><input type="checkbox" class="part"><svg><use href="#result"/></svg>Uzlové posuny</label></div>
                  <ul>
                    <li><div class="row"><span class="noexp"></span><label><input type="checkbox" checked><svg><use href="#result"/></svg>u<sub>g</sub></label></div></li>
                    <li><div class="row"><span class="noexp"></span><label><input type="checkbox"><svg><use href="#result"/></svg>u<sub>g,x</sub></label></div></li>
                    <li><div class="row"><span class="noexp"></span><label><input type="checkbox"><svg><use href="#result"/></svg>u<sub>g,y</sub></label></div></li>
                    <li><div class="row"><span class="noexp"></span><label><input type="checkbox"><svg><use href="#result"/></svg>u<sub>g,z</sub></label></div></li>
                    <li><div class="row"><span class="noexp"></span><label><input type="checkbox"><svg><use href="#result"/></svg>φ<sub>g,x</sub></label></div></li>
                    <li><div class="row"><span class="noexp"></span><label><input type="checkbox"><svg><use href="#result"/></svg>φ<sub>g,y</sub></label></div></li>
                    <li><div class="row"><span class="noexp"></span><label><input type="checkbox"><svg><use href="#result"/></svg>φ<sub>g,z</sub></label></div></li>
                  </ul>
                </li>
                <li><div class="row"><button class="exp" aria-label="Sbalit"></button><label><input type="checkbox" class="part"><svg><use href="#result"/></svg>Lokální uzlové posuny</label></div>
                  <ul>
                    <li><div class="row"><span class="noexp"></span><label><input type="checkbox"><svg><use href="#result"/></svg>u<sub>l</sub></label></div></li>
                    <li><div class="row"><span class="noexp"></span><label><input type="checkbox"><svg><use href="#result"/></svg>u<sub>l,x</sub></label></div></li>
                    <li><div class="row"><span class="noexp"></span><label><input type="checkbox"><svg><use href="#result"/></svg>u<sub>l,y</sub></label></div></li>
                    <li><div class="row"><span class="noexp"></span><label><input type="checkbox"><svg><use href="#result"/></svg>u<sub>l,z</sub></label></div></li>
                    <li><div class="row"><span class="noexp"></span><label><input type="checkbox"><svg><use href="#result"/></svg>φ<sub>l,x</sub></label></div></li>
                    <li><div class="row"><span class="noexp"></span><label><input type="checkbox"><svg><use href="#result"/></svg>φ<sub>l,y</sub></label></div></li>
                    <li><div class="row"><span class="noexp"></span><label><input type="checkbox"><svg><use href="#result"/></svg>φ<sub>l,z</sub></label></div></li>
                    <li><div class="row"><span class="noexp"></span><label><input type="checkbox"><svg><use href="#result"/></svg>u<sub>l</sub>&nbsp;/L</label></div></li>
                  </ul>
                </li>
                <li><div class="row"><button class="exp" aria-label="Sbalit"></button><label><input type="checkbox" class="part"><svg><use href="#result"/></svg>Šířka trhlin</label></div>
                  <ul>
                    <li><div class="row"><span class="noexp"></span><label><input type="checkbox"><svg><use href="#result"/></svg>w<sub>k</sub></label></div></li>
                  </ul>
                </li>
                <li><div class="row"><button class="exp plus" aria-label="Rozbalit"></button><label><input type="checkbox" class="part"><svg><use href="#result"/></svg>Součinitel spolehlivosti</label></div></li>
              </ul>
            </li>
            <li><div class="row"><button class="exp plus" aria-label="Rozbalit"></button><label><input type="checkbox"><svg><use href="#result"/></svg>Výztuž - rendering</label></div></li>
          </ul>
          <div class="marker"></div>
        </div>
        <div class="tabs">
          <button><svg><use href="#t-data"/></svg>Data</button>
          <button><svg><use href="#t-show"/></svg>Zobrazit</button>
          <button><svg><use href="#t-views"/></svg>Pohledy</button>
          <button class="active"><svg><use href="#t-res"/></svg>Výsledky</button>
        </div>
      </aside>

      <section class="view">
        <p class="caption">CONCRETE PŘ1 - Stahlbetonbemessung von Stäben</p>
        <svg class="model" viewBox="0 0 984 919" preserveAspectRatio="xMinYMin meet">
          <!-- column faces -->
          <path d="M418.500 68v729l35.500-15V72z" fill="#d3d3d3"/>
          <path d="M418.500 797l35.500-15v19z" fill="#92a892"/>
          <path d="M454 72v710l31 4V76z" fill="#b8b8b8"/>
          <path d="M454 782l31 4v19l-31-4z" fill="#8b9f8b"/>
          <path d="M485 76v710l34.500 4V61z" fill="#a6a6a6"/>
          <path d="M485 786l34.500 4-34.500 15z" fill="#7f937f"/>
          <path d="M418.500 68.500L454 53.500l65.500 8L485 76.500z" fill="#9e3234"/>
          <!-- support block -->
          <path d="M418.500 797l66.500 8 34.500-15v18L485 823l-66.500-8z" fill="#80ff80"/>
          <path d="M418.500 797l35.500 4-35.500 14z" fill="#3cf83c"/>
          <!-- axis and deflection -->
          <path d="M469 65v728" stroke="#a29bd0" stroke-width="2"/>
          <circle cx="469" cy="65" r="2" fill="#600038"/>
          <path d="M469 793C469 690 477 586 492 483" fill="none" stroke="#7c7cc8"/>
          <path d="M492 483C510 354 538.500 226 567 97" fill="none" stroke="#1414dc"/>
          <text class="lbl blue" x="572" y="110">9.3</text>
          <!-- member axes -->
          <g id="triad" fill="none" stroke-width="2">
            <path d="M469 793v32" stroke="#0000f0"/>
            <path d="M466 824h6l-3 9z" fill="#0000a0"/>
            <path d="M469 793l27 3" stroke="#f00000"/>
            <path d="M495.500 793v6l9-2z" fill="#a80000"/>
            <path d="M469 793l-14 5" stroke="#00e000"/>
            <path d="M454 795.500l2 5-7 .5z" fill="#008c00"/>
          </g>
          <text class="lbl red" x="510" y="803">X</text>
          <text class="lbl green" x="442" y="807">Y</text>
          <text class="lbl blue" x="466" y="846">Z</text>
          <!-- global axes -->
          <use href="#triad" x="-414" y="-6"/>
          <text class="lbl red" x="96" y="796">X</text>
          <text class="lbl green" x="28" y="801">Y</text>
          <text class="lbl blue" x="52" y="840">Z</text>
        </svg>
        <p class="extremes">Max u-g: 9.3, Min u-g: 0.0 mm<br>Max u-z,local: Nelze posoudit</p>
      </section>
    </main>

    <footer class="status">
      <span class="ready">Hotovo</span>
      <div class="modes">
        <button>UCHOP</button>
        <button class="up">RASTR</button>
        <button>KARTEZ</button>
        <button>OUCHOP</button>
        <button>VLINIE</button>
        <button>DXF</button>
      </div>
      <div class="cells"><i></i><i></i><i></i><i></i><i></i></div>
      <svg class="sizer" viewBox="0 0 10 10"><path d="M8 0h2v2H8zM4 4h2v2H4zM8 4h2v2H8zM0 8h2v2H0zM4 8h2v2H4zM8 8h2v2H8z" fill="#667"/></svg>
    </footer>
  </div>
</body>
</html>
```
FILE: styles.css
```css
* { box-sizing: border-box; }
body { margin: 0; font-family: "Open Sans", "Noto Sans", sans-serif; font-size: 11px; color: #000; }
button { padding: 0; border: 0; background: none; font: inherit; color: inherit; }
p { margin: 0; }
.sprite { display: block; }
.val { font-family: "Liberation Serif", serif; font-size: 6px; fill: #778; }
.val.strong { font-size: 7px; font-weight: bold; fill: #222; }
.dir { font-family: "Liberation Serif", serif; font-size: 10px; }
.sym { font-family: "Liberation Sans", sans-serif; font-size: 8px; font-weight: bold; fill: #888; }

.window { display: flex; flex-direction: column; height: 100vh; background: #d0d4dd; border: 1px solid #6a6c70; border-bottom: 0; }

/* title */
.titlebar { display: flex; align-items: center; height: 30px; padding-left: 8px; background: #fff; }
.titlebar .ico { width: 16px; height: 16px; margin-right: 5px; }
.titlebar .title { flex: 1; }
.winbtns { display: flex; }
.winbtns button { display: flex; align-items: center; justify-content: center; width: 46px; height: 30px; }
.winbtns svg { width: 11px; height: 11px; }

/* menu */
.menubar { display: flex; align-items: center; gap: 1px; height: 24px; padding-left: 1px; color: #4a4e58; }
.menubar .logo { width: 16px; height: 13px; margin-right: 1px; }
.menubar a { padding: 0 7px; color: inherit; text-decoration: none; }
.mdibtns { display: flex; gap: 6px; margin: 4px 4px 0 auto; }
.mdibtns svg { display: block; width: 10px; height: 9px; }

/* toolbars */
.toolrow { display: flex; gap: 2px; height: 26px; padding-left: 1px; }
.toolbar { display: flex; align-items: center; height: 26px; padding-right: 2px; background: linear-gradient(#eef1f8, #dfe3ec 50%, #cdd2de); border-bottom: 1px solid #a4a8b4; border-radius: 4px; }
.toolbar.gap { margin-left: 4px; }
.grip { width: 9px; height: 16px; background: conic-gradient(from 90deg at 3px 2px, transparent 90deg, transparent 180deg, transparent 0), repeating-linear-gradient(#a8aebc 0 2px, transparent 2px 4px) 3px 0 / 2px 100% no-repeat; }
.toolbar button { display: flex; align-items: center; justify-content: center; width: 22px; height: 22px; }
.toolbar svg { width: 16px; height: 16px; overflow: visible; }
.toolbar .on { border: 1px solid #a8946c; border-radius: 2px; background: linear-gradient(#f9b868, #fcd484 50%, #fff0a8); }
.toolbar .pressed { border: 1px solid #98a4ac; border-radius: 2px; background: #dce2e6; }
.toolbar .drop { width: 13px; }
.toolbar .drop::after { content: ""; border: 3px solid transparent; border-top-color: #777; border-bottom: 0; }
.sep { width: 8px; height: 14px; background: linear-gradient(#a8acb8, #a8acb8) 3px 0 / 1px 100% no-repeat; }
.combo {
  width: 154px; height: 19px; margin: 0 2px; padding: 0 15px 0 3px; border: 0; border-radius: 0; appearance: none;
  font: inherit; color: #000;
  background: linear-gradient(225deg, #777 50%, transparent 50%) right 7px top 8px / 3px 3px no-repeat,
    linear-gradient(135deg, #777 50%, transparent 50%) right 4px top 8px / 3px 3px no-repeat,
    linear-gradient(#dfe3ec, #dfe3ec) right 1px top 1px / 14px 17px no-repeat, #fff;
}

/* work area */
.work { display: flex; flex: 1; gap: 5px; min-height: 0; padding-top: 1px; }
.navigator { display: flex; flex-direction: column; width: 413px; flex: none; }
.navhead { display: flex; align-items: center; gap: 6px; height: 19px; padding: 0 5px 2px 4px; background: #b9c0cb; border-bottom: 1px solid #a4a9b4; color: #444850; }
.navhead span { flex: 1; }
.navhead svg { display: block; width: 10px; height: 10px; }
.treebox { position: relative; flex: 1; min-height: 0; padding: 3px 0 0 9px; background: #fcfbf3; border: solid #8c909a; border-width: 0 1px 1px 0; overflow: hidden; }
.marker { position: absolute; left: 3px; top: 72px; width: 276px; height: 472px; border: 4px solid #ed1c24; border-radius: 2px; }

/* tree */
.tree, .tree ul { margin: 0; padding: 0; list-style: none; }
.tree ul { padding-left: 20px; }
.tree li { background: repeating-linear-gradient(#888 0 1px, transparent 1px 2px) 5px 0 / 1px 100% no-repeat; }
.tree li:last-child { background-size: 1px 11px; }
.tree > li:first-child { background-position: 5px 10px; }
.row { display: flex; align-items: center; height: 18px; background: repeating-linear-gradient(90deg, #888 0 1px, transparent 1px 2px) 5px 10px / 12px 1px no-repeat; }
.row label { display: flex; align-items: center; line-height: 18px; white-space: pre; }
.row svg { width: 14px; height: 12px; margin: 0 6px 0 4px; }
.row sub { margin-top: 3px; font-size: 10px; line-height: 10px; vertical-align: baseline; }
.noexp { width: 19px; }
.exp { width: 9px; height: 9px; margin: 2px 9px 0 1px; border: 1px solid #8c8c8c; border-radius: 1px; background: linear-gradient(#3050a0, #3050a0) 1px 3px / 5px 1px no-repeat, #fff; }
.exp.plus { background: linear-gradient(#3050a0, #3050a0) 1px 3px / 5px 1px no-repeat, linear-gradient(#3050a0, #3050a0) 3px 1px / 1px 5px no-repeat, #fff; }
.row input { appearance: none; width: 13px; height: 13px; margin: 0; border: 1px solid #484c54; background: linear-gradient(135deg, #fff, #c6cee0); }
.row input[type="radio"] { border-radius: 50%; }
.row input[type="radio"]:checked { background: radial-gradient(circle, #111 2px, #f0f2f8 3px); }
.row input.part { background: linear-gradient(#989898, #989898) 2px 2px / 7px 7px no-repeat, linear-gradient(135deg, #fff, #c6cee0); }
.row input[type="checkbox"]:checked { display: grid; place-items: center; }
.row input[type="checkbox"]:checked::after { content: ""; width: 4px; height: 7px; margin-bottom: 2px; border: solid #000; border-width: 0 2px 2px 0; rotate: 45deg; }

/* navigator tabs */
.tabs { display: flex; align-items: flex-start; gap: 5px; height: 23px; padding-left: 3px; color: #50545c; }
.tabs button { display: flex; align-items: center; gap: 2px; height: 20px; padding: 0 3px; }
.tabs svg { width: 16px; height: 16px; }
.tabs .active { background: #f2f3f6; border: solid #b4e0e4; border-width: 0 1px 1px; border-radius: 0 0 3px 3px; padding: 0 2px; }

/* model view */
.view { position: relative; flex: 1; min-width: 0; margin: 0 1px 2px 0; background: #fff; border: solid #66686c; border-width: 1px 0 0 1px; font-family: "Liberation Sans", Arial, sans-serif; font-size: 11px; line-height: 10px; }
.model { display: block; width: 100%; height: 100%; }
.caption { position: absolute; left: 4px; top: 7px; }
.extremes { position: absolute; left: 4px; bottom: 7px; }
.lbl { font-size: 10px; }
.blue { fill: #0000e0; }
.red { fill: #e00000; }
.green { fill: #00c800; }

/* status bar */
.status { display: flex; align-items: center; height: 20px; background: linear-gradient(#e6e8ee, #c8ccd4 35%, #a8aeb8 50%, #b8bcc6); border-top: 1px solid #9ca0b0; color: #222; }
.ready { width: 617px; padding: 1px 0 0 4px; }
.modes { display: flex; gap: 2px; height: 18px; }
.modes button { padding: 0 4px 0 2px; border: 1px solid; border-color: #000 #fff #fff #000; color: #222; font-family: "Liberation Sans", Arial, sans-serif; }
.modes .up { border-color: #fff #888 #888 #fff; }
.cells { display: flex; flex: 1; height: 17px; }
.cells i { width: 74px; border-left: 1px solid #989ca6; }
.cells i:first-child { flex: 1; }
.cells i:nth-child(2) { width: 88px; }
.cells i:last-child { width: 80px; }
.sizer { align-self: flex-end; width: 10px; height: 10px; }
```
